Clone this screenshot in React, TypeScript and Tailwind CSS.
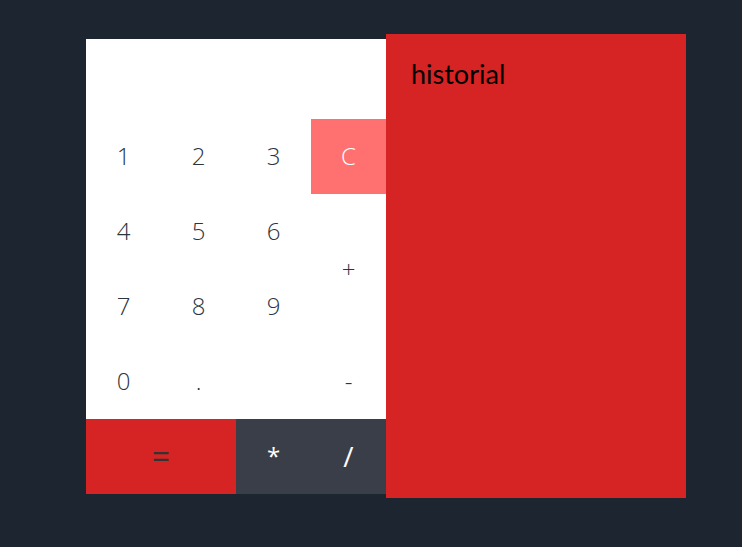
const keys: { label: string; cls: string }[] = [
  { label: '1', cls: 'text-[#2c3440]' },
  { label: '2', cls: 'text-[#2c3440]' },
  { label: '3', cls: 'text-[#2c3440]' },
  { label: 'C', cls: 'bg-[#ff7070] text-white' },
  { label: '4', cls: 'text-[#2c3440]' },
  { label: '5', cls: 'text-[#2c3440]' },
  { label: '6', cls: 'text-[#2c3440]' },
  { label: '+', cls: 'row-span-2 text-[#2c3440]' },
  { label: '7', cls: 'text-[#2c3440]' },
  { label: '8', cls: 'text-[#2c3440]' },
  { label: '9', cls: 'text-[#2c3440]' },
  { label: '0', cls: 'text-[#2c3440]' },
  { label: '.', cls: 'text-[#2c3440]' },
  { label: '', cls: '' },
  { label: '-', cls: 'text-[#2c3440]' },
  { label: '=', cls: 'col-span-2 bg-[#d62323] text-[#333] !text-[32px] !font-normal' },
  { label: '*', cls: 'bg-[#3a3e48] text-white !font-normal' },
  { label: '/', cls: 'bg-[#3a3e48] text-white !text-[28px] !font-normal' },
];

export default function App() {
  return (
    <div className="min-h-[547px] w-full bg-[#1d2530] flex items-center pl-[86px] pb-[15px]">
      <div className="flex items-center">
        {/* calculadora */}
        <div className="w-[300px] bg-white">
          <div className="h-[80px]" />
          <div className="grid grid-cols-[repeat(4,75px)] auto-rows-[75px]">
            {keys.map((k, i) => (
              <button
                key={i}
                className={`flex items-center justify-center font-light text-[24px] ${k.cls}`}
                style={{ fontFamily: '"Open Sans", sans-serif' }}
              >
                {k.label}
              </button>
            ))}
          </div>
        </div>

        {/* historial */}
        <div className="w-[300px] h-[464px] bg-[#d62323] px-[25px] pt-[26px]">
          <h2 className="text-[27px] text-black leading-none" style={{ fontFamily: 'Lato, sans-serif' }}>
            historial
          </h2>
        </div>
      </div>
    </div>
  );
}
